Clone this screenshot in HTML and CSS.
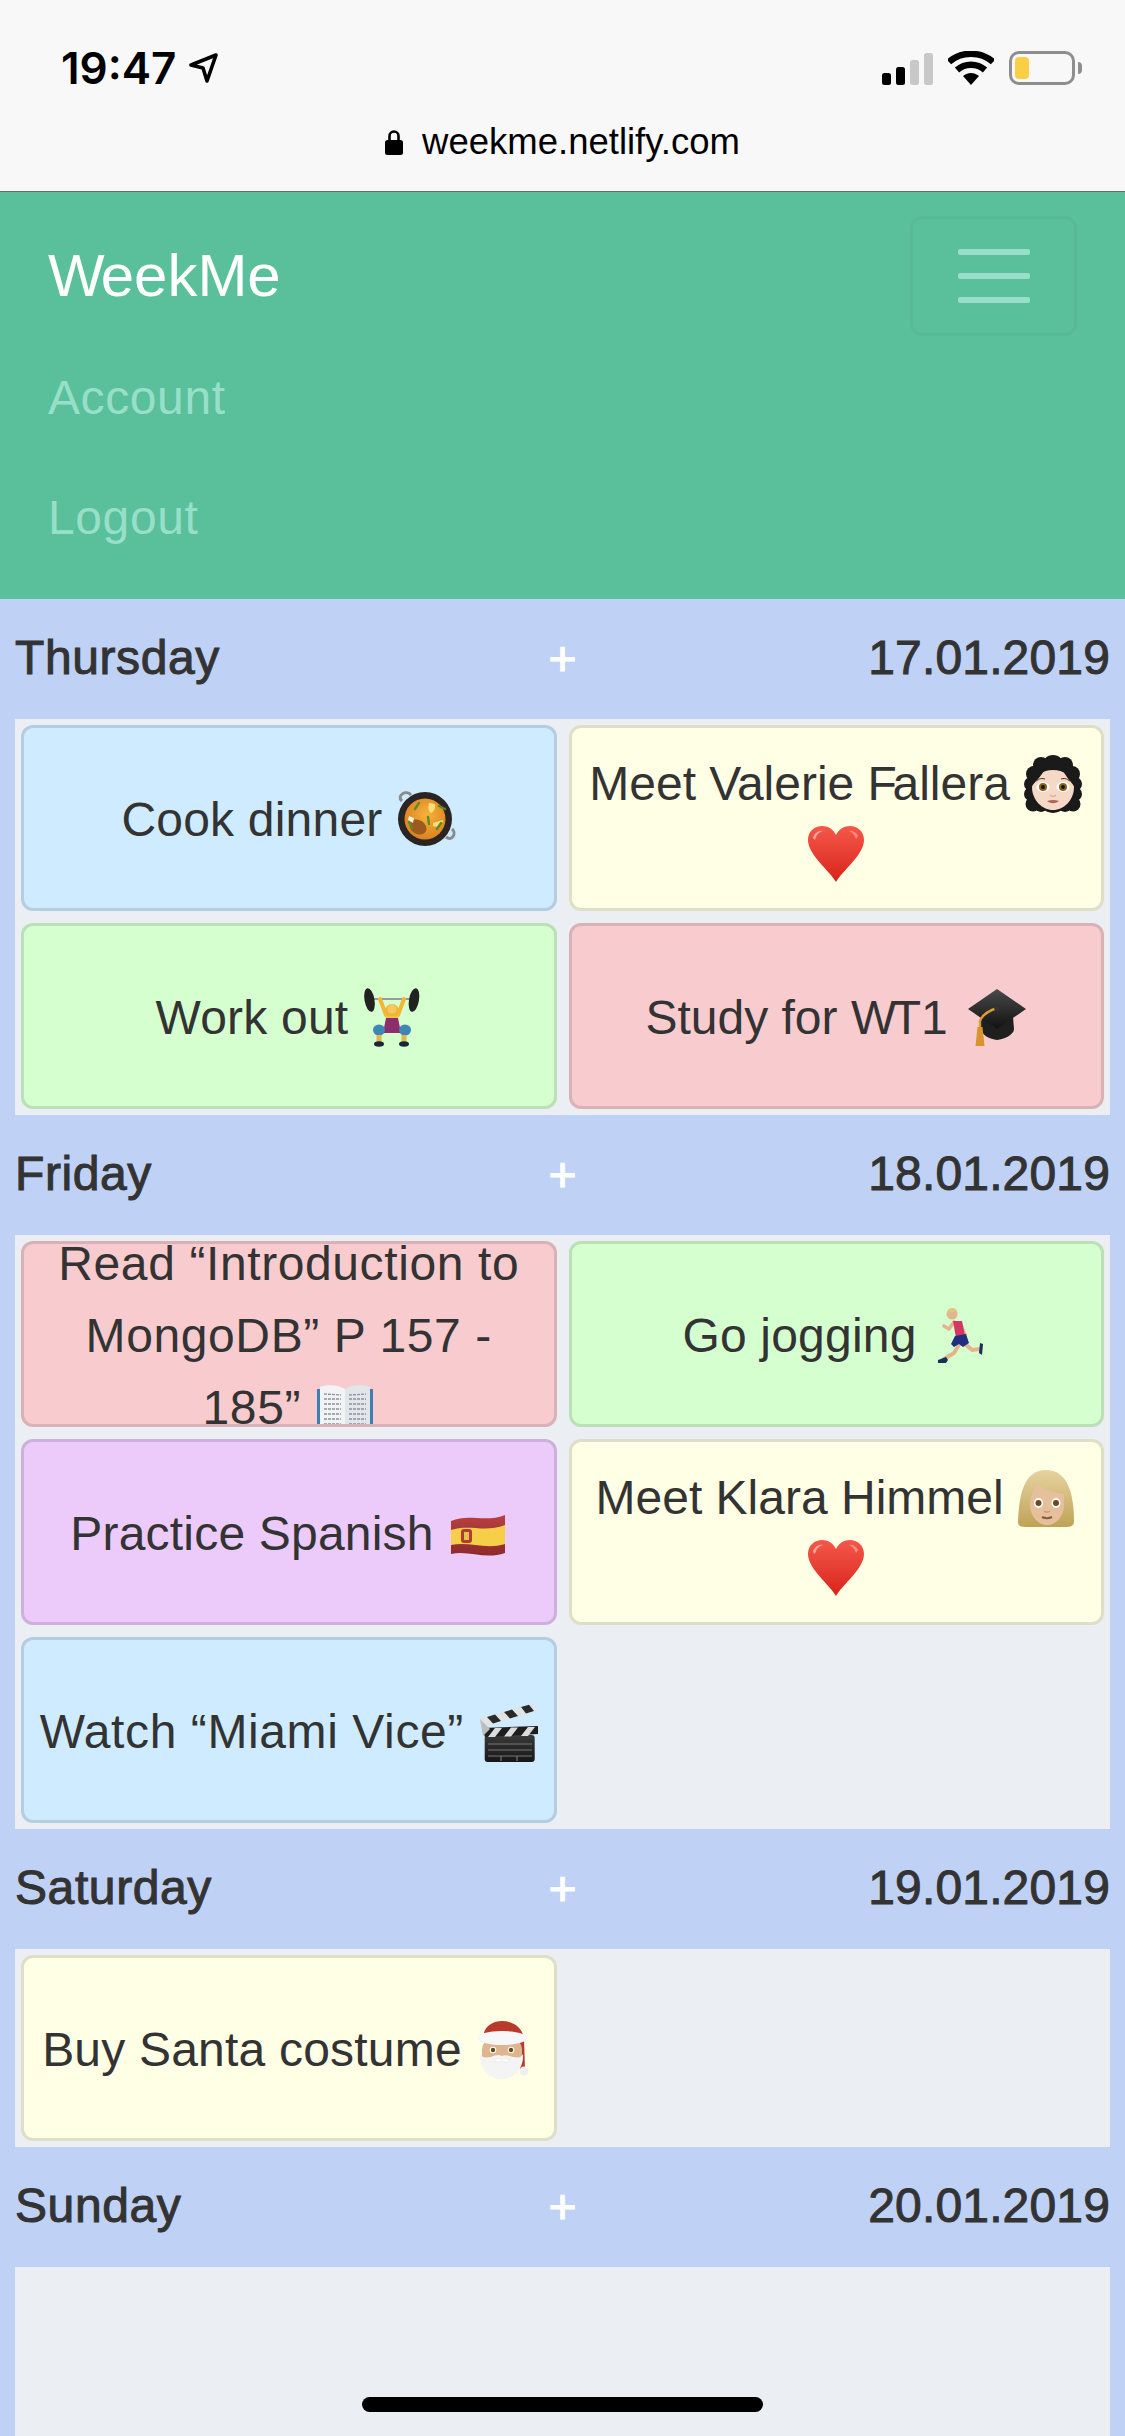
FILE: index.html
```html
<!DOCTYPE html>
<html lang="en">
<head>
<meta charset="utf-8">
<title>WeekMe</title>
<link rel="stylesheet" href="styles.css">
</head>
<body>
<div class="page">
  <svg class="defs" width="0" height="0" aria-hidden="true">
    <defs>
      <linearGradient id="heartG" x1="0" y1="0" x2="0" y2="1"><stop offset="0" stop-color="#F4584A"/><stop offset="1" stop-color="#D9241B"/></linearGradient>
      <radialGradient id="riceG" cx=".55" cy=".4" r=".65"><stop offset="0" stop-color="#F7B23B"/><stop offset="1" stop-color="#D97E1E"/></radialGradient>
      <linearGradient id="capG" x1="0" y1="0" x2="0" y2="1"><stop offset="0" stop-color="#4A4A4A"/><stop offset="1" stop-color="#111"/></linearGradient>
      <linearGradient id="blondG" x1="0" y1="0" x2="0" y2="1"><stop offset="0" stop-color="#E6D3A0"/><stop offset="1" stop-color="#BFA257"/></linearGradient>
      <linearGradient id="boardG" x1="0" y1="0" x2="0" y2="1"><stop offset="0" stop-color="#3A3A3A"/><stop offset="1" stop-color="#161616"/></linearGradient>
      <linearGradient id="redFlagG" x1="0" y1="0" x2="0" y2="1"><stop offset="0" stop-color="#B8403F"/><stop offset="1" stop-color="#8E2A2C"/></linearGradient>
      <symbol id="heart" viewBox="0 0 60 60">
        <path d="M30 57C24 46 2 30 2 15 2 6 9 1 16 1c6 0 11 3 14 9 3-6 8-9 14-9 7 0 14 5 14 14 0 15-22 31-28 42z" fill="url(#heartG)"/>
        <path d="M7 13c1-5 6-8 10-7-4 1-7 4-8 9z" fill="#FBA79C"/>
        <path d="M52 11c-2-4-6-6-9-5 3 1 6 4 7 8z" fill="#FBA79C" opacity=".7"/>
      </symbol>
    </defs>
  </svg>

  <header class="chrome">
    <div class="status">
      <div class="status-left">
        <span class="time">19:47</span>
        <svg class="arrow" viewBox="0 0 30 30"><path d="M2 12 27 2 18 28 14 15z" fill="none" stroke="#000" stroke-width="3.6" stroke-linejoin="round"/></svg>
      </div>
      <div class="status-right">
        <div class="signal">
          <span class="sig s1"></span><span class="sig s2"></span><span class="sig s3"></span><span class="sig s4"></span>
        </div>
        <svg class="wifi" viewBox="0 0 46 34">
          <path d="M1 11C13 0 33 0 45 11" fill="none" stroke="#000" stroke-width="6.4"/>
          <path d="M9 19c8-7 20-7 28 0" fill="none" stroke="#000" stroke-width="6.4"/>
          <path d="M15 25c5-4 11-4 16 0L23 34z" fill="#000"/>
        </svg>
        <div class="battery"><span class="battery-fill"></span></div>
        <span class="battery-nub"></span>
      </div>
    </div>
    <div class="url">
      <svg class="lock" viewBox="0 0 18 26"><path d="M4.5 12V7a4.5 4.5 0 0 1 9 0v5" fill="none" stroke="#000" stroke-width="2.6"/><rect x="0" y="11" width="18" height="15" rx="2.5" fill="#000"/></svg>
      <span class="url-text">weekme.netlify.com</span>
    </div>
  </header>

  <nav class="nav">
    <div class="nav-top">
      <a class="brand"><span class="kern-w">W</span>eekMe</a>
      <button class="toggler" type="button" aria-label="Menu"><span class="bar"></span><span class="bar"></span><span class="bar"></span></button>
    </div>
    <a class="nav-link">Account</a>
    <a class="nav-link">Logout</a>
  </nav>

  <main class="week">
    <div class="day-head"><span class="day-name">Thursday</span><span class="day-add">+</span><span class="day-date">17.01.2019</span></div>
    <section class="tasks">
      <div class="card blue">
        <div class="card-text">Cook dinner
          <svg class="emoji" viewBox="0 0 60 60"><path d="M6 12c-6-5 4-12 9-6M50 48c6 5 11-4 6-8" fill="none" stroke="#8B8B8B" stroke-width="3"/><circle cx="29" cy="30" r="27" fill="#2A2523"/><circle cx="29" cy="30" r="20.500" fill="url(#riceG)"/><ellipse cx="22" cy="38" rx="9" ry="7" fill="#9C5A1E" transform="rotate(30 22 38)"/><path d="M13 27l5 2-1 5-5-3z" fill="#F4EFE3"/><path d="M33 14l6 1c1 5-2 8-4 9-3-2-3-6-2-10zM37 34l10-3c0 4-5 8-10 6z" fill="#F7E27A"/><path d="M19 20l4-6M32 28l1 7M43 17l6 3M13 33l3 6M41 40l4-6" stroke="#5E8B25" stroke-width="2.400" stroke-linecap="round"/></svg>
        </div>
      </div>
      <div class="card yellow tight">
        <div class="card-text">Meet <span class="kern">V</span>alerie <span class="kern">F</span>allera
          <svg class="emoji" viewBox="0 0 60 60"><g fill="#1B1A1B"><circle cx="30" cy="13" r="11"/><circle cx="18" cy="12" r="8"/><circle cx="42" cy="12" r="8"/><circle cx="11" cy="21" r="8"/><circle cx="49" cy="21" r="8"/><circle cx="8" cy="31" r="7"/><circle cx="52" cy="31" r="7"/><circle cx="8" cy="41" r="7"/><circle cx="52" cy="41" r="7"/><circle cx="10" cy="51" r="7.500"/><circle cx="50" cy="51" r="7.500"/><circle cx="18" cy="53" r="6"/><circle cx="42" cy="53" r="6"/><circle cx="30" cy="45" r="15"/></g><path d="M9 34C10 23 20 17 30 17s20 6 21 17c0 13-10 23-21 23S9 47 9 34z" fill="#F5D8C6"/><path d="M9 33C13 28 19 22 22 16L39 16C42 22 47 28 51 33L54 15 30 6 8 14z" fill="#1B1A1B"/><path d="M13 28c2-2 6-3 9-2M38 26c3-1 7 0 9 2" fill="none" stroke="#5B4636" stroke-width="1.200"/><ellipse cx="20" cy="34" rx="6.500" ry="5" fill="#fff"/><ellipse cx="40" cy="34" rx="6.500" ry="5" fill="#fff"/><circle cx="20" cy="34" r="4" fill="#8A6414"/><circle cx="40" cy="34" r="4" fill="#8A6414"/><circle cx="20" cy="34" r="1.900" fill="#111"/><circle cx="40" cy="34" r="1.900" fill="#111"/><path d="M27 42c2 2 4 2 6 0" fill="none" stroke="#DFAE98" stroke-width="1.600"/><path d="M24 48c4-1.500 8-1.500 12 0-4 3-8 3-12 0z" fill="#A8685A"/></svg>
          <svg class="emoji" viewBox="0 0 60 60"><use href="#heart"/></svg>
        </div>
      </div>
      <div class="card green">
        <div class="card-text">Work out
          <svg class="emoji" viewBox="0 0 60 60"><path d="M8 12 52 12" stroke="#9A9A9A" stroke-width="2"/><ellipse cx="7.500" cy="13" rx="5" ry="12" fill="#222" transform="rotate(-10 7.500 13)"/><ellipse cx="52" cy="13" rx="5" ry="12" fill="#222" transform="rotate(10 52 13)"/><path d="M18 12 24 28M42 12 36 28" stroke="#F2B632" stroke-width="4" stroke-linecap="round"/><path d="M23 26h14l-2 14H25z" fill="#F2C244"/><path d="M24 31h12l3 15H21z" fill="#8C2D6C"/><path d="M23 26c-1-12 15-12 14 0l-2 3H25z" fill="#EDB43A"/><circle cx="30" cy="22" r="4.500" fill="#F7C860"/><ellipse cx="17" cy="43" rx="6" ry="5.500" fill="#3D86B6"/><ellipse cx="43" cy="43" rx="6" ry="5.500" fill="#3D86B6"/><path d="M17 48v7M42 48v7" stroke="#E8B448" stroke-width="5"/><ellipse cx="17" cy="57" rx="5" ry="2.800" fill="#16293B"/><ellipse cx="42" cy="57" rx="5" ry="2.800" fill="#16293B"/></svg>
        </div>
      </div>
      <div class="card red tight">
        <div class="card-text">Study for <span class="kern">W</span>T1
          <svg class="emoji emoji-gap" viewBox="0 0 60 60"><path d="M14 30h32l1 12c0 6-10 10-17 11-7-1-16-5-16-11z" fill="#1F1F1F"/><path d="M30 2 59 22 30 42 1 22z" fill="url(#capG)"/><path d="M30 21C24 23 16 26 13 34v8" fill="none" stroke="#D99B32" stroke-width="2.400"/><circle cx="30" cy="21" r="2.800" fill="#333"/><path d="M10.500 40h5l2 19h-9z" fill="#D9952B"/></svg>
        </div>
      </div>
    </section>

    <div class="day-head"><span class="day-name">Friday</span><span class="day-add">+</span><span class="day-date">18.01.2019</span></div>
    <section class="tasks">
      <div class="card red wide">
        <div class="card-text">Read “Introduction to MongoDB” P 157 - 185”
          <svg class="emoji" viewBox="0 0 60 60"><path d="M2 12h56v48H2z" fill="#3F7FB0"/><path d="M5 10c8-3 19-2 25 2v46c-6-4-17-5-25-2z" fill="#F1F3F5"/><path d="M55 10c-8-3-19-2-25 2v46c6-4 17-5 25-2z" fill="#E2E6EA"/><path d="M9 17l17 1M9 22h17M9 27h17M9 32h17M9 37h17M9 42h17M9 47h17M34 18l17-1M34 22h17M34 27h17M34 32h17M34 37h17M34 42h17M34 47h17" stroke="#8C939B" stroke-width="1.300" stroke-dasharray="3 1"/></svg>
        </div>
      </div>
      <div class="card green">
        <div class="card-text">Go jogging
          <svg class="emoji" viewBox="0 0 60 60"><path d="M24 17 19 24 14 21M30 18 35 30 33 36" fill="none" stroke="#E2B58E" stroke-width="3.600" stroke-linecap="round" stroke-linejoin="round"/><path d="M30 38 24 48 14 54M34 38 42 45 50 44" fill="none" stroke="#E2B58E" stroke-width="4" stroke-linecap="round" stroke-linejoin="round"/><circle cx="22" cy="9" r="5.500" fill="#E2B58E"/><path d="M17 8c0-5 8-7 10-2z" fill="#E3C680"/><path d="M23 16h9l3 15-9 2z" fill="#D43765"/><path d="M25 31l11-2 3 9-6 4-4-3-5 3-3-3z" fill="#20307E"/><path d="M8 55l8-3 2 3-2 3h-8z" fill="#17305A"/><path d="M50 38l3 1-1 11-3-2z" fill="#17305A"/></svg>
        </div>
      </div>
      <div class="card purple">
        <div class="card-text">Practice Spanish
          <svg class="emoji" viewBox="0 0 60 60"><path d="M4 18c18-8 34 2 54-6v38c-20 7-36-3-54 1z" fill="url(#redFlagG)"/><path d="M4 27c18-6 34 3 54-5v19c-20 6-36-3-54 1z" fill="#F6CE47"/><rect x="14" y="26" width="11" height="14" rx="3" fill="#B33B33"/><rect x="17" y="29" width="5" height="8" fill="#E9C24E"/></svg>
        </div>
      </div>
      <div class="card yellow tight">
        <div class="card-text">Meet Klara Himmel
          <svg class="emoji" viewBox="0 0 60 60"><path d="M1 55C2 25 8 3 29 3s28 22 28 52c0 4-4 5-8 5H9c-5 0-8-1-8-5z" fill="url(#blondG)"/><path d="M13 37c0-10 5-15 8-20 8 7 18 9 26 10v11c0 12-8 20-17 20S13 49 13 37z" fill="#E6BF9C"/><ellipse cx="21.500" cy="36" rx="4.500" ry="5" fill="#fff"/><ellipse cx="39" cy="36" rx="4.500" ry="5" fill="#fff"/><circle cx="21.500" cy="36" r="3" fill="#6A4A20"/><circle cx="39" cy="36" r="3" fill="#6A4A20"/><path d="M27 44c2 1.500 4 1.500 6 0" fill="none" stroke="#C99C78" stroke-width="1.500"/><path d="M25 50c3 1.500 7 1.500 10 0" fill="none" stroke="#8A5A44" stroke-width="2"/></svg>
          <svg class="emoji" viewBox="0 0 60 60"><use href="#heart"/></svg>
        </div>
      </div>
      <div class="card blue wide">
        <div class="card-text">Watch “Miami Vice”
          <svg class="emoji" viewBox="0 0 60 60"><rect x="6.700" y="34" width="50" height="27" rx="3" fill="url(#boardG)"/><path d="M4 27 60 25v8L7 36z" fill="#1E1E1E"/><path d="M10 36l7-9h7l-7 9zM26 35.500l7-9h7l-7 9zM43 35l7-9h7l-7 9z" fill="#DCDCDC"/><path d="M1.500 18 55.700 2.700 58 10 4 26z" fill="#E3E3E3"/><path d="M9 16 17 13.500 23 20l-8 2.500zM26 11 34 8.500 40 15l-8 2.500zM43 6 51 3.700 56 10l-8 2.500z" fill="#2A2A2A"/><path d="M2 18 12 28 5 35z" fill="#BDBDBD"/><path d="M10 43h44M10 49h44M10 55h44M23 55v5M39 55v5" stroke="#777" stroke-width="1.200"/></svg>
        </div>
      </div>
    </section>

    <div class="day-head"><span class="day-name">Saturday</span><span class="day-add">+</span><span class="day-date">19.01.2019</span></div>
    <section class="tasks">
      <div class="card yellow">
        <div class="card-text">Buy Santa costume
          <svg class="emoji" viewBox="0 0 60 60"><path d="M8 18C9 7 18 2 27 2c11 0 20 6 22 17l1 31h-5V22z" fill="#B93A2B"/><rect x="7" y="20" width="40" height="28" rx="10" fill="#DDB58F"/><path d="M5 35c3 5 7 3 11 3 4-2 8-3 11-1 3-2 7 0 11 1 4 0 7 2 10-3 1 14-8 25-21 25S4 49 5 35z" fill="#F4F4F4"/><path d="M19 42c3-3 6-3 8-1 2-2 5-2 8 1-3 2-6 1-8 0-2 1-5 2-8 0z" fill="#fff" stroke="#DDD" stroke-width=".6"/><ellipse cx="27" cy="19" rx="25" ry="7" fill="#F7F7F7"/><circle cx="18" cy="31" r="3.300" fill="#fff"/><circle cx="36" cy="31" r="3.300" fill="#fff"/><circle cx="18" cy="31" r="2.200" fill="#6A4718"/><circle cx="36" cy="31" r="2.200" fill="#6A4718"/><circle cx="49" cy="52" r="4.500" fill="#EFEFEF"/></svg>
        </div>
      </div>
    </section>

    <div class="day-head"><span class="day-name">Sunday</span><span class="day-add">+</span><span class="day-date">20.01.2019</span></div>
    <section class="tasks tasks-fill"></section>
  </main>

  <div class="home-indicator"></div>
</div>
</body>
</html>
```

FILE: styles.css
```css
* { box-sizing: border-box; }
html, body { margin: 0; padding: 0; }
body {
  font-family: "Liberation Sans", Arial, sans-serif;
  color: #333;
  background: #BFD1F5;
}
.page {
  position: relative;
  width: 1125px;
  height: 2436px;
  overflow: hidden;
  display: flex;
  flex-direction: column;
}
.defs { position: absolute; }

/* Browser chrome */
.chrome {
  height: 192px;
  background: #F8F8F8;
  border-bottom: 1px solid #5F6E69;
  padding: 50px 43px 0 61px;
  display: flex;
  flex-direction: column;
}
.status { display: flex; justify-content: space-between; align-items: center; height: 36px; }
.status-left { display: flex; align-items: center; gap: 13px; }
.time { font: 600 44px/36px Inter, sans-serif; color: #000; }
.arrow { width: 30px; height: 30px; }
.status-right { display: flex; align-items: center; }
.signal { display: flex; align-items: flex-end; gap: 5px; height: 33px; margin-right: 15px; }
.sig { width: 9px; border-radius: 2.5px; background: #000; }
.s1 { height: 12px; }
.s2 { height: 18px; }
.s3 { height: 25px; background: #C8C8C8; }
.s4 { height: 32px; background: #C8C8C8; }
.wifi { width: 46px; height: 34px; margin-right: 15px; }
.battery {
  width: 66px;
  height: 34px;
  border: 3px solid #8E8E8E;
  border-radius: 10px;
  padding: 3px;
}
.battery-fill { display: block; width: 14px; height: 22px; border-radius: 4px; background: #FBCF44; }
.battery-nub { width: 4px; height: 12px; margin-left: 3px; background: #8E8E8E; border-radius: 0 4px 4px 0; }
.url {
  display: flex;
  align-items: center;
  justify-content: center;
  gap: 19px;
  margin: 33px -43px 0 -61px;
  color: #000;
}
.lock { width: 18px; height: 26px; }
.url-text { font-size: 36.500px; line-height: 46px; }

/* Navbar */
.nav {
  background: #5AC09C;
  padding: 24px 48px 23px;
  display: flex;
  flex-direction: column;
}
.nav-top { display: flex; justify-content: space-between; align-items: center; }
.brand { font-size: 60px; line-height: 90px; color: #fff; }
.kern-w { letter-spacing: -4px; }
.toggler {
  width: 167px;
  height: 120px;
  padding: 0;
  background: transparent;
  border: 3px solid rgba(0, 0, 0, 0.03);
  border-radius: 12px;
  display: flex;
  flex-direction: column;
  align-items: center;
  justify-content: center;
  gap: 18px;
}
.bar { display: block; width: 72px; height: 6px; border-radius: 2px; background: #97DFC8; }
.nav-link {
  font-size: 48px;
  line-height: 72px;
  padding: 26px 0 22px;
  color: #97DFC8;
  letter-spacing: 0.6px;
}

/* Week */
.week { flex: 1; display: flex; flex-direction: column; min-height: 0; }
.day-head {
  display: grid;
  grid-template-columns: 1fr 1fr 1fr;
  padding: 24px 15px;
  font-size: 48px;
  line-height: 72px;
}
.day-name,
.day-date {
  line-height: 69px;
  -webkit-text-stroke: 1px #333;
}
.day-name { letter-spacing: 0.6px; }
.day-date { text-align: right; letter-spacing: 0.15px; }
.day-add { text-align: center; color: #fff; -webkit-text-stroke: 1.2px #fff; }
.tasks {
  margin: 0 15px;
  padding: 6px;
  background: #EBEEF3;
  display: grid;
  grid-template-columns: 1fr 1fr;
  grid-auto-rows: 186px;
  gap: 12px;
}
.tasks-fill { flex: 1; }
.card {
  border: 3px solid rgba(0, 0, 0, 0.125);
  border-radius: 12px;
  padding: 3px 12px 0;
  overflow: hidden;
  display: flex;
  align-items: center;
  justify-content: center;
  font-size: 48px;
  line-height: 72px;
  letter-spacing: 0.2px;
  text-align: center;
}
.tight { letter-spacing: 0; }
.wide { letter-spacing: 0.6px; }
.card-text { flex: 1; min-width: 0; }
.kern { letter-spacing: -4.500px; }
.blue { background-color: #CFEBFF; }
.yellow { background-color: #FFFFE5; }
.green { background-color: #D6FFD0; }
.red { background-color: #F8CCCF; }
.purple { background-color: #ECCBFB; }
.emoji { width: 60px; height: 60px; vertical-align: -13px; overflow: visible; }
.emoji-gap { margin-left: 6px; }

.home-indicator {
  position: absolute;
  left: 362px;
  top: 2397px;
  width: 401px;
  height: 15px;
  border-radius: 8px;
  background: #000;
}
```
